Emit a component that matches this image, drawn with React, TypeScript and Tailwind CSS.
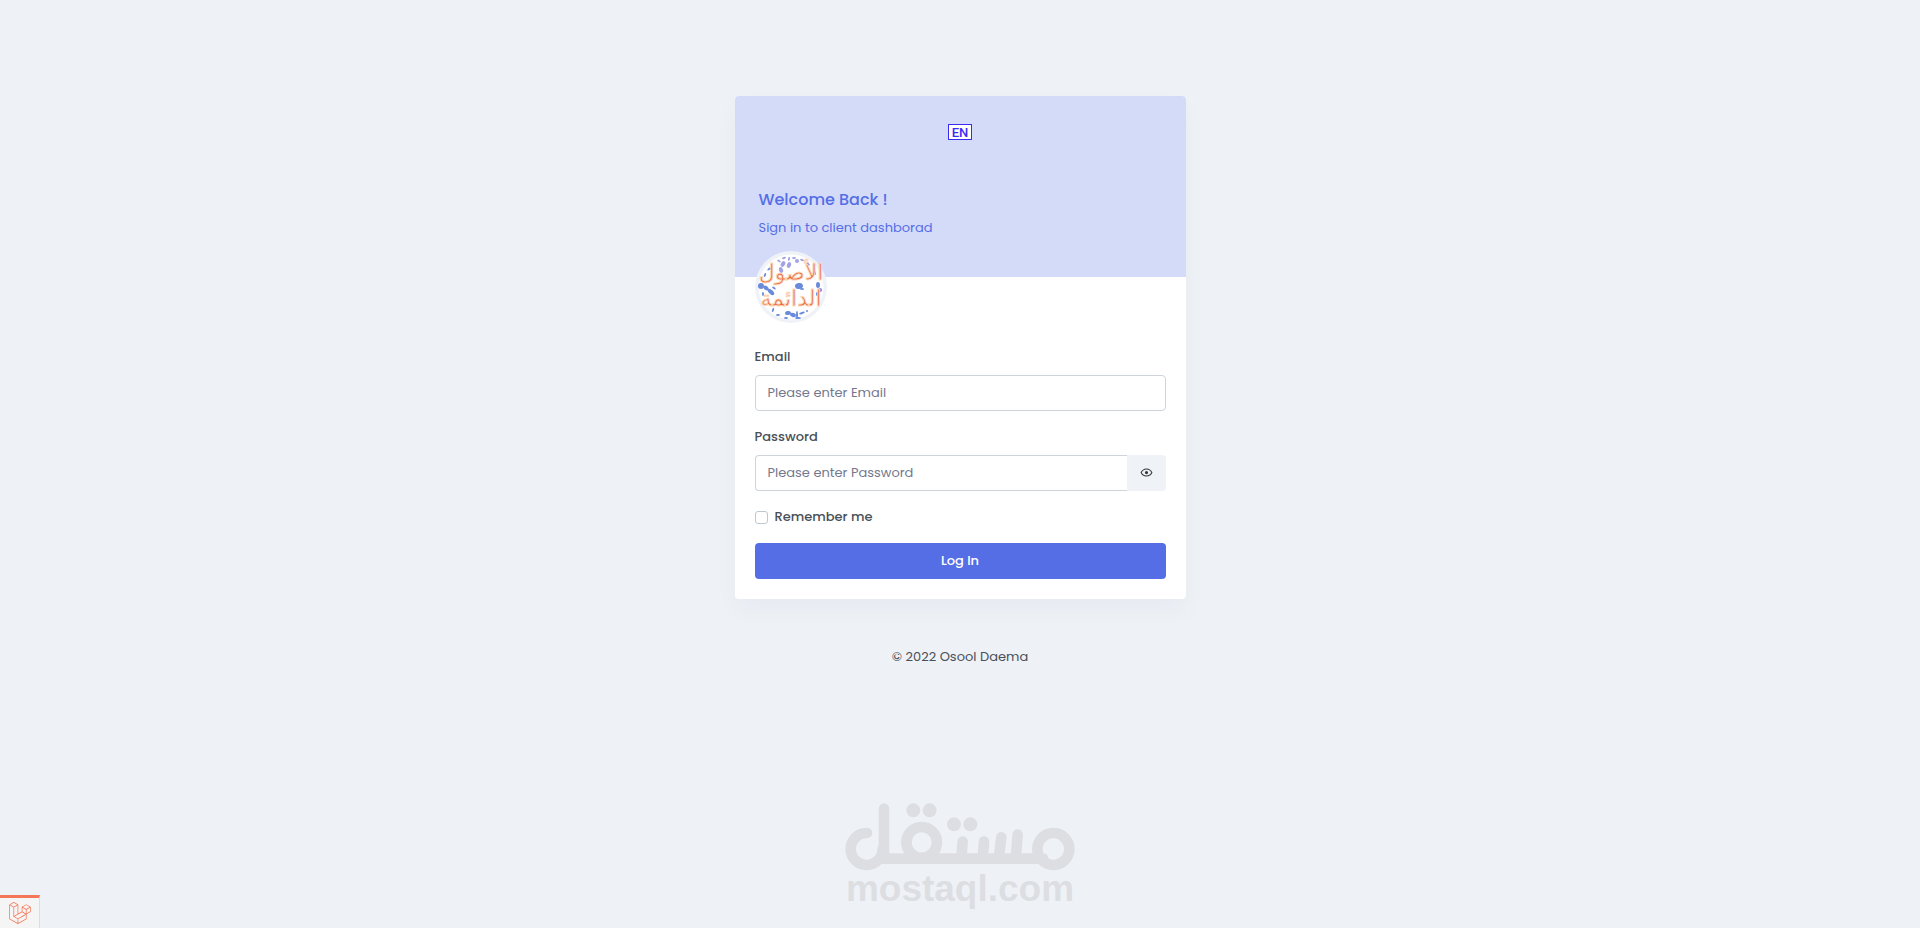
import React, { useState } from "react";
import { SiLaravel } from "react-icons/si";

// x, y, rx, ry, rotation
const blueSpots = [
  [24, 10, 2, 1, 30], [29, 7, 2, 1, -20], [34, 8, 1, 2, 10], [39, 7, 2, 1, 0],
  [28, 13, 2, 3, 30], [34, 14, 2, 3, 20], [26, 19, 2, 3, -20], [42, 10, 2, 2, 0],
  [47, 9, 2, 1, 20], [6, 35, 3, 3, 0], [11, 37, 3, 2, 40], [16, 41, 4, 2, 45],
  [8, 43, 1, 2, 0], [44, 35, 4, 3, -10], [47, 38, 2, 1, 0], [63, 34, 2, 3, 0],
  [65, 39, 2, 2, 0], [62, 43, 1, 2, 0], [18, 59, 1, 2, 20], [23, 64, 2, 1, 0],
  [33, 62, 3, 2, -10], [38, 64, 3, 2, 20], [42, 64, 1, 4, 0], [47, 62, 3, 1, -20],
  [52, 60, 1, 1, 0], [31, 67, 2, 1, 0], [43, 67, 3, 1, 0], [19, 37, 2, 1, 30],
  [10, 24, 1, 2, 20], [14, 18, 2, 1, -40], [60, 22, 1, 2, -10], [53, 13, 2, 1, 40],
];

function BrandAvatar() {
  return (
    <svg viewBox="0 0 72 72" className="size-18" role="img" aria-label="Osool Daema">
      <circle cx="36" cy="36" r="36" fill="#eff2f7" />
      <circle cx="36" cy="36" r="32.5" fill="#fff" />
      {blueSpots.map(([x, y, rx, ry, angle], i) => (
        <ellipse
          key={i}
          cx={x}
          cy={y}
          rx={rx}
          ry={ry}
          transform={`rotate(${angle} ${x} ${y})`}
          fill={i < 9 ? "#a3a3e3" : "#6a8adc"}
        />
      ))}
      <g
        fill="#e8683c"
        stroke="#fcdcc0"
        strokeWidth="0.9"
        textAnchor="middle"
        fontFamily="'DejaVu Sans', sans-serif"
        fontWeight="400"
      >
        <text x="36" y="29" fontSize="22">الأصول</text>
        <text x="36" y="55" fontSize="22">الدائمة</text>
      </g>
    </svg>
  );
}

function EyeIcon({ className }: { className?: string }) {
  return (
    <svg viewBox="0 0 24 24" fill="currentColor" className={className}>
      <path d="M12,9A3,3 0 0,1 15,12A3,3 0 0,1 12,15A3,3 0 0,1 9,12A3,3 0 0,1 12,9M12,4.5C17,4.5 21.27,7.61 23,12C21.27,16.39 17,19.5 12,19.5C7,19.5 2.73,16.39 1,12C2.73,7.61 7,4.5 12,4.5M3.18,12C4.83,15.36 8.24,17.5 12,17.5C15.76,17.5 19.17,15.36 20.82,12C19.17,8.64 15.76,6.5 12,6.5C8.24,6.5 4.83,8.64 3.18,12Z" />
    </svg>
  );
}

function Watermark() {
  return (
    <div className="pointer-events-none absolute inset-x-0 bottom-[21px] flex flex-col items-center text-[#dddee2]">
      <svg viewBox="45 68 690 204" className="h-17 w-[230px]" fill="none" stroke="currentColor" strokeWidth="32" strokeLinecap="round">
        <circle cx="110" cy="206" r="48" pathLength="100" strokeDasharray="75 25" />
        <line x1="162" y1="85" x2="162" y2="232" />
        <line x1="150" y1="235" x2="640" y2="235" />
        <circle cx="275" cy="186" r="46" />
        <line x1="398" y1="184" x2="394" y2="235" />
        <line x1="462" y1="184" x2="458" y2="235" />
        <line x1="514" y1="171" x2="506" y2="235" />
        <line x1="563" y1="163" x2="557" y2="235" />
        <circle cx="670" cy="206" r="48" />
        <g fill="currentColor" stroke="none">
          <circle cx="250" cy="90" r="21" />
          <circle cx="299" cy="90" r="21" />
          <circle cx="372" cy="132" r="21" />
          <circle cx="421" cy="132" r="21" />
        </g>
      </svg>
      <span className="font-['Liberation_Sans',Arial,sans-serif] text-[37px] leading-9 font-bold">mostaql.com</span>
    </div>
  );
}

export default function App() {
  const [showPassword, setShowPassword] = useState(false);

  return (
    <div className="relative min-h-screen bg-[#eef2f7] px-3 pt-24 pb-36 font-[Poppins,Inter,sans-serif] text-[13px] leading-5 text-[#495057]">
      <main className="mx-auto max-w-[451px] overflow-hidden rounded bg-white shadow-[0_12px_24px_rgba(18,38,63,0.03)]">
        <div className="bg-[#d4dbf9] px-6 pt-7 pb-[39px] text-[#556ee6]">
          <div className="flex justify-center">
            <a
              href="#"
              className="flex h-4 w-6 items-center justify-center border border-[#3a2cf5] bg-white font-[Roboto,sans-serif] text-[13px] leading-none font-medium text-[#3a2cf5]"
            >
              EN
            </a>
          </div>
          <h5 className="mt-12 text-base leading-6 font-medium">Welcome Back !</h5>
          <p className="mt-1.5">Sign in to client dashborad</p>
        </div>

        <div className="px-5 pb-5">
          <a href="#" className="relative -mt-[26px] block w-18">
            <BrandAvatar />
          </a>

          <form className="mt-6" onSubmit={(e) => e.preventDefault()}>
            <label htmlFor="email" className="block font-medium">
              Email
            </label>
            <input
              id="email"
              type="email"
              placeholder="Please enter Email"
              className="mt-2 block h-9 w-full rounded border border-[#ced4da] bg-white px-3 outline-none placeholder:text-[#74788d]"
            />

            <label htmlFor="password" className="mt-4 block font-medium">
              Password
            </label>
            <div className="mt-2 flex h-9">
              <input
                id="password"
                type={showPassword ? "text" : "password"}
                placeholder="Please enter Password"
                className="min-w-0 flex-1 rounded-l border border-r-0 border-[#ced4da] bg-white px-3 outline-none placeholder:text-[#74788d]"
              />
              <button
                type="button"
                aria-label="Show password"
                onClick={() => setShowPassword(!showPassword)}
                className="flex w-[39px] items-center justify-center rounded-r bg-[#eff2f7] pb-0.5 text-[#343a40]"
              >
                <EyeIcon className="size-[13px]" />
              </button>
            </div>

            <div className="mt-4 flex items-center gap-[7px]">
              <input
                id="remember"
                type="checkbox"
                className="size-[13px] appearance-none rounded-[3px] border border-[#bfc8d0] bg-white checked:bg-[#556ee6]"
              />
              <label htmlFor="remember" className="font-medium">
                Remember me
              </label>
            </div>

            <button type="submit" className="mt-4 block h-9 w-full rounded bg-[#556ee6] font-medium text-white">
              Log In
            </button>
          </form>
        </div>
      </main>

      <p className="mt-12 text-center">© 2022 Osool Daema</p>

      <Watermark />

      <button
        type="button"
        aria-label="Open debug bar"
        className="fixed bottom-0 left-0 flex h-[33px] w-10 items-center justify-center border-t-3 border-r border-t-[#f4775a] border-r-[#ddd] bg-[#f5f5f5] text-[#f4704e]"
      >
        <SiLaravel className="size-[22px]" />
      </button>
    </div>
  );
}
